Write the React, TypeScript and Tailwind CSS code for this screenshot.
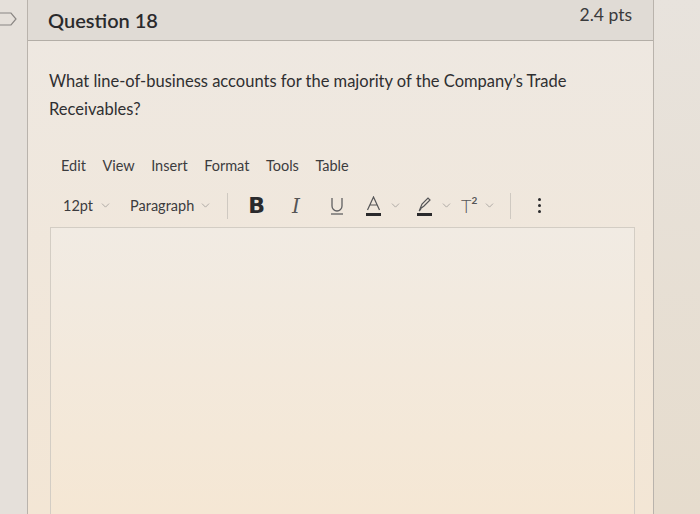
import { ChevronDown } from "lucide-react";

const menu = ["Edit", "View", "Insert", "Format", "Tools", "Table"];

function Caret() {
  return <ChevronDown className="w-[13px] h-[13px] text-[#9a9794]" strokeWidth={1.4} />;
}

function Sep() {
  return <div className="w-px h-[26px] bg-[#cfc9c1]" />;
}

export default function App() {
  return (
    <div
      className="w-[700px] h-[514px] flex overflow-hidden bg-[#e5e0da] text-[#2f2f31]"
      style={{ fontFamily: "Lato, 'Open Sans', sans-serif" }}
    >
      {/* left gutter with bookmark */}
      <div className="w-[27px] shrink-0 pt-[12px]">
        <svg width="18" height="14" viewBox="0 0 18 14" fill="none">
          <path d="M0 1 H11 L16 7 L11 13 H0" stroke="#8a8683" strokeWidth="1.2" />
        </svg>
      </div>

      {/* question card */}
      <div className="w-[627px] shrink-0 flex flex-col border-l border-r border-[#b9b3ac] bg-[#efe8e0]">
        <div className="h-[41px] shrink-0 flex justify-between items-start bg-[#e0dbd5] border-b border-[#b3aea7] pl-[20px] pr-[21px]">
          <span className="text-[20px] font-semibold mt-[5px] text-[#2a2a2c]">Question 18</span>
          <span className="text-[17.5px] mt-[2px] text-[#3a3a3c]">2.4 pts</span>
        </div>

        <div className="flex-1 flex flex-col pl-[21px] pr-[19px] bg-gradient-to-b from-[#eee8e1] to-[#f3e6d5]">
          <p className="mt-[26px] text-[16.5px] leading-[28px] text-[#2f2f31]">
            What line-of-business accounts for the majority of the Company’s Trade
            <br />
            Receivables?
          </p>

          <div className="mt-[32px] ml-[12px] flex gap-[16.5px] text-[14.5px] text-[#3c3c3e]">
            {menu.map((m) => (
              <span key={m}>{m}</span>
            ))}
          </div>

          <div className="mt-[15px] ml-[14px] h-[28px] flex items-center text-[14.5px] text-[#3c3c3e]">
            <span>12pt</span>
            <span className="ml-[6px]"><Caret /></span>
            <span className="ml-[18px]">Paragraph</span>
            <span className="ml-[5px]"><Caret /></span>
            <div className="ml-[15px]"><Sep /></div>
            <span className="ml-[20px] text-[22px] leading-none font-bold text-[#2a2a2c]" style={{ fontFamily: "'DejaVu Sans', sans-serif" }}>B</span>
            <span className="ml-[27px] text-[20px] italic text-[#555]" style={{ fontFamily: "'DejaVu Serif', serif" }}>I</span>
            <span className="ml-[31px]">
              <svg width="12" height="18" viewBox="0 0 12 18" fill="none">
                <path d="M1 1 V9 A5 5 0 0 0 11 9 V1" stroke="#606062" strokeWidth="1.3" />
                <path d="M0 17 H12" stroke="#606062" strokeWidth="1.3" />
              </svg>
            </span>
            <span className="ml-[23px] flex flex-col items-center">
              <svg width="15" height="20" viewBox="0 0 15 20" fill="none">
                <path d="M1.5 14 L7.5 1 L13.5 14 M4 9 H11" stroke="#555557" strokeWidth="1.2" />
                <rect x="0" y="17" width="15" height="3" fill="#2a2a2c" />
              </svg>
            </span>
            <span className="ml-[8px]"><Caret /></span>
            <span className="ml-[15px]">
              <svg width="15" height="20" viewBox="0 0 15 20" fill="none">
                <path d="M3 13 L5 8 L11 2 L13 4 L7 10 Z M2 15 L4 13" stroke="#555557" strokeWidth="1.2" />
                <rect x="0" y="17" width="15" height="3" fill="#2a2a2c" />
              </svg>
            </span>
            <span className="ml-[8px]"><Caret /></span>
            <span className="ml-[8px] flex items-start text-[#555557]">
              <span className="text-[18px] leading-none font-light">T</span>
              <span className="text-[10px] leading-none font-bold -mt-[2px]">2</span>
            </span>
            <span className="ml-[6px]"><Caret /></span>
            <div className="ml-[14px]"><Sep /></div>
            <span className="ml-[27px] flex flex-col gap-[3px]">
              <span className="w-[3px] h-[3px] rounded-full bg-[#2a2a2c]" />
              <span className="w-[3px] h-[3px] rounded-full bg-[#2a2a2c]" />
              <span className="w-[3px] h-[3px] rounded-full bg-[#2a2a2c]" />
            </span>
          </div>

          <div className="mt-[7px] ml-[1px] w-[585px] flex-1 border border-[#d3cdc4] border-b-0 bg-gradient-to-b from-[#f1ebe3] to-[#f5e7d4]" />
        </div>
      </div>

      <div className="flex-1 bg-gradient-to-b from-[#e8e3dd] to-[#e6dccd]" />
    </div>
  );
}
